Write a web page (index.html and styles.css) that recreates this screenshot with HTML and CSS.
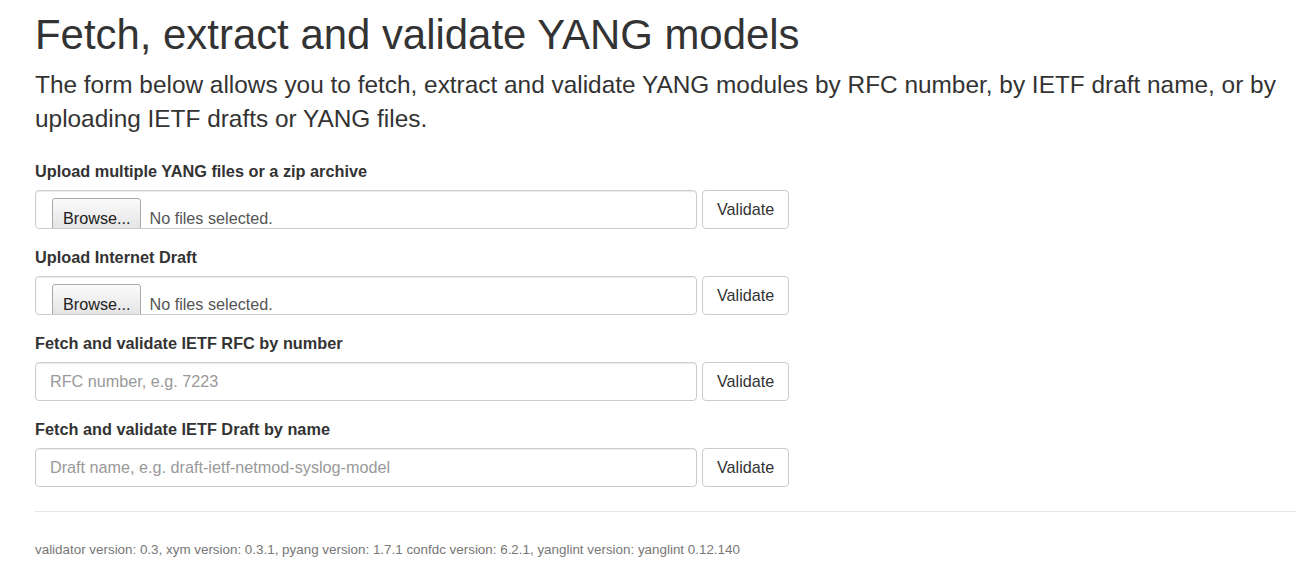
FILE: index.html
```html
<!DOCTYPE html>
<html lang="en">
<head>
<meta charset="utf-8">
<title>YANG validator</title>
<link rel="stylesheet" href="styles.css">
</head>
<body>
<div class="container">
  <h1 class="title">Fetch, extract and validate YANG models</h1>
  <p class="lead">The form below allows you to fetch, extract and validate YANG modules by RFC number, by IETF draft name, or by uploading IETF drafts or YANG files.</p>
  <form class="forms">
    <div class="group">
      <label class="label">Upload multiple YANG files or a zip archive</label>
      <div class="row">
        <div class="control file-control"><span class="browse">Browse...</span><span class="file-status">No files selected.</span></div>
        <button type="button" class="btn">Validate</button>
      </div>
    </div>
    <div class="group">
      <label class="label">Upload Internet Draft</label>
      <div class="row">
        <div class="control file-control"><span class="browse">Browse...</span><span class="file-status">No files selected.</span></div>
        <button type="button" class="btn">Validate</button>
      </div>
    </div>
    <div class="group">
      <label class="label">Fetch and validate IETF RFC by number</label>
      <div class="row">
        <input class="control" type="text" placeholder="RFC number, e.g. 7223">
        <button type="button" class="btn">Validate</button>
      </div>
    </div>
    <div class="group">
      <label class="label">Fetch and validate IETF Draft by name</label>
      <div class="row">
        <input class="control" type="text" placeholder="Draft name, e.g. draft-ietf-netmod-syslog-model">
        <button type="button" class="btn">Validate</button>
      </div>
    </div>
  </form>
  <hr class="rule">
  <p class="footer">validator version: 0.3, xym version: 0.3.1, pyang version: 1.7.1 confdc version: 6.2.1, yanglint version: yanglint 0.12.140</p>
</div>
</body>
</html>
```

FILE: styles.css
```css
html, body {
  margin: 0;
  padding: 0;
  overflow-x: hidden;
  background: #fff;
}

body {
  font-family: "Liberation Sans", Arial, sans-serif;
  font-size: 16.2px;
  line-height: 1.428;
  color: #333;
}

.container {
  width: 1300px;
  padding-left: 35px;
}

.title {
  font-size: 41.9px;
  font-weight: normal;
  line-height: 45px;
  margin: 12px 0 11px;
  color: #333;
}

.lead {
  font-size: 24.4px;
  line-height: 33.6px;
  margin: 0 0 25px;
}

.forms {
  margin: 0;
}

.group {
  margin-bottom: 17px;
}

.label {
  display: block;
  font-size: 16.3px;
  font-weight: bold;
  line-height: 23px;
  margin-bottom: 7px;
}

.row {
  display: flex;
  gap: 5px;
}

.control {
  width: 662px;
  height: 39px;
  box-sizing: border-box;
  border: 1px solid #ccc;
  border-radius: 4px;
  box-shadow: inset 0 1px 1px rgba(0, 0, 0, 0.075);
  padding: 7px 14px;
  font: inherit;
  color: #555;
  background: #fff;
  margin: 0;
}

.control::placeholder {
  color: #999;
}

.file-control {
  display: flex;
  align-items: baseline;
  overflow: hidden;
  padding: 7px 0 0 16px;
}

.browse {
  display: inline-block;
  border: 1px solid #a9a9a9;
  border-radius: 3px 3px 0 0;
  padding: 10px 10px 12px;
  line-height: 18px;
  background: linear-gradient(#fbfbfb, #dcdcdc);
  color: #222;
}

.file-status {
  margin-left: 8px;
  color: #555;
}

.btn {
  height: 39px;
  box-sizing: border-box;
  padding: 0 14px;
  border: 1px solid #ccc;
  border-radius: 4px;
  background: #fff;
  color: #333;
  font: inherit;
  margin: 0;
}

.rule {
  border: 0;
  border-top: 1px solid #e6e6e6;
  margin: 24px 0 28px;
}

.footer {
  font-size: 13.4px;
  line-height: 19.6px;
  color: #777;
  margin: 0;
}
```
